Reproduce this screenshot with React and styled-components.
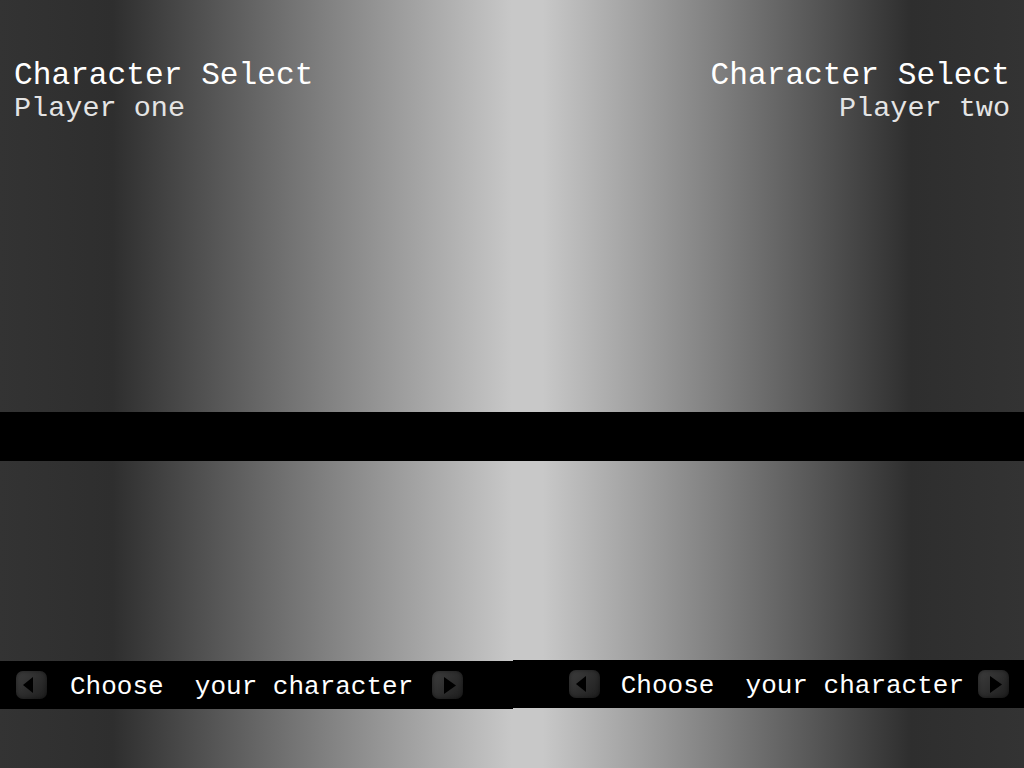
import React from "react";
import styled, { createGlobalStyle } from "styled-components";

const Global = createGlobalStyle`
  html, body { margin: 0; padding: 0; }
  body { background: #333; }
`;

const Screen = styled.div`
  width: 1024px;
  height: 768px;
  overflow: hidden;
  display: flex;
  flex-direction: column;
  font-family: "Liberation Mono", "DejaVu Sans Mono", monospace;
  color: #fff;
  background: linear-gradient(
    to right,
    #333 0%,
    #2e2e2e 11%,
    #c8c8c8 50%,
    #c8c8c8 53%,
    #2e2e2e 89%,
    #333 100%
  );
`;

const TopArea = styled.div`
  height: 412px;
  display: flex;
  justify-content: space-between;
  padding: 60px 14px 0;
  box-sizing: border-box;
`;

const HeaderBlock = styled.div`
  display: flex;
  flex-direction: column;
  align-items: ${(p) => (p.$right ? "flex-end" : "flex-start")};
  text-align: ${(p) => (p.$right ? "right" : "left")};
`;

const Title = styled.div`
  font-size: 31.2px;
  line-height: 31px;
  white-space: pre;
`;

const Subtitle = styled.div`
  margin-top: 3px;
  font-size: 28.5px;
  line-height: 29px;
  color: #e4e4e4;
  white-space: pre;
`;

const Stripe = styled.div`
  height: 49px;
  background: #000;
`;

const MidArea = styled.div`
  flex: 1;
`;

const FooterRow = styled.div`
  display: flex;
  align-items: flex-start;
  height: 49px;
  margin-bottom: 59px;
`;

const FooterHalf = styled.div`
  flex: 1;
  height: 48px;
  margin-top: ${(p) => (p.$right ? "0" : "1px")};
  background: #000;
  display: flex;
  align-items: center;
  justify-content: ${(p) => (p.$right ? "flex-end" : "flex-start")};
  padding: ${(p) => (p.$right ? "0 15px 0 0" : "0 0 0 16px")};
  box-sizing: border-box;
`;

const ArrowButton = styled.div`
  width: 31px;
  height: 28px;
  border-radius: 7px;
  background: linear-gradient(135deg, #3e3e3e 0%, #2c2c2c 55%, #1e1e1e 100%);
  box-shadow: inset 0 0 4px rgba(0, 0, 0, 0.5);
  display: flex;
  align-items: center;
  justify-content: center;
  flex-shrink: 0;
  svg { display: block; }
`;

const Prompt = styled.div`
  font-size: 26px;
  line-height: 26px;
  padding-top: 3px;
  white-space: pre;
  margin: 0 ${(p) => p.$after}px 0 ${(p) => p.$before}px;
`;

const Arrow = ({ dir }) => (
  <ArrowButton>
    <svg width="31" height="28" viewBox="0 0 31 28">
      {dir === "left" ? (
        <polygon points="17,6 17,22 7,14" fill="#000" />
      ) : (
        <polygon points="12,6 12,23 24,14.5" fill="#000" />
      )}
    </svg>
  </ArrowButton>
);

const ChooseBar = ({ right }) => (
  <FooterHalf $right={right}>
    <Arrow dir="left" />
    <Prompt $before={right ? 21 : 23} $after={right ? 14 : 19}>
      Choose  your character
    </Prompt>
    <Arrow dir="right" />
  </FooterHalf>
);

export default function App() {
  return (
    <>
      <Global />
      <Screen>
        <TopArea>
          <HeaderBlock>
            <Title>Character Select</Title>
            <Subtitle>Player one</Subtitle>
          </HeaderBlock>
          <HeaderBlock $right>
            <Title>Character Select</Title>
            <Subtitle>Player two</Subtitle>
          </HeaderBlock>
        </TopArea>
        <Stripe />
        <MidArea />
        <FooterRow>
          <ChooseBar />
          <ChooseBar right />
        </FooterRow>
      </Screen>
    </>
  );
}
